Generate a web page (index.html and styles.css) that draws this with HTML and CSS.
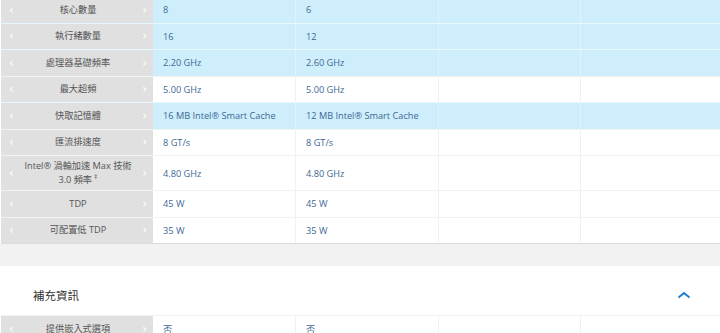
FILE: index.html
```html
<!DOCTYPE html>
<html lang="zh-Hant">
<head>
<meta charset="utf-8">
<link rel="stylesheet" href="styles.css">
</head>
<body>
<div class="specs">
  <div class="row hl"><div class="label"><span class="arr">‹</span><span class="lt">核心數量</span><span class="arr">›</span></div><div class="val">8</div><div class="val">6</div><div class="val"></div><div class="val"></div></div>
  <div class="row hl"><div class="label"><span class="arr">‹</span><span class="lt">執行緒數量</span><span class="arr">›</span></div><div class="val">16</div><div class="val">12</div><div class="val"></div><div class="val"></div></div>
  <div class="row hl"><div class="label"><span class="arr">‹</span><span class="lt">處理器基礎頻率</span><span class="arr">›</span></div><div class="val">2.20 GHz</div><div class="val">2.60 GHz</div><div class="val"></div><div class="val"></div></div>
  <div class="row"><div class="label"><span class="arr">‹</span><span class="lt">最大超頻</span><span class="arr">›</span></div><div class="val">5.00 GHz</div><div class="val">5.00 GHz</div><div class="val"></div><div class="val"></div></div>
  <div class="row hl"><div class="label"><span class="arr">‹</span><span class="lt">快取記憶體</span><span class="arr">›</span></div><div class="val">16 MB Intel® Smart Cache</div><div class="val">12 MB Intel® Smart Cache</div><div class="val"></div><div class="val"></div></div>
  <div class="row"><div class="label"><span class="arr">‹</span><span class="lt">匯流排速度</span><span class="arr">›</span></div><div class="val">8 GT/s</div><div class="val">8 GT/s</div><div class="val"></div><div class="val"></div></div>
  <div class="row tall"><div class="label"><span class="arr">‹</span><span class="lt">Intel® 渦輪加速 Max 技術<br>3.0 頻率<sup>‡</sup></span><span class="arr">›</span></div><div class="val">4.80 GHz</div><div class="val">4.80 GHz</div><div class="val"></div><div class="val"></div></div>
  <div class="row"><div class="label"><span class="arr">‹</span><span class="lt">TDP</span><span class="arr">›</span></div><div class="val">45 W</div><div class="val">45 W</div><div class="val"></div><div class="val"></div></div>
  <div class="row last"><div class="label"><span class="arr">‹</span><span class="lt">可配置低 TDP</span><span class="arr">›</span></div><div class="val">35 W</div><div class="val">35 W</div><div class="val"></div><div class="val"></div></div>
</div>
<div class="band"></div>
<section class="section">
  <div class="sec-head">
    <h2 class="sec-title">補充資訊</h2>
    <svg class="caret" width="14" height="8" viewBox="0 0 14 8"><path d="M1.5 6.5 L7 2 L12.5 6.5" fill="none" stroke="#1a7fd0" stroke-width="2"/></svg>
  </div>
  <div class="specs">
    <div class="row"><div class="label"><span class="arr">‹</span><span class="lt">提供嵌入式選項</span><span class="arr">›</span></div><div class="val">否</div><div class="val">否</div><div class="val"></div><div class="val"></div></div>
  </div>
</section>
</body>
</html>
```
FILE: styles.css
```css
html, body {
  margin: 0;
  padding: 0;
  background: #ffffff;
  font-family: "Open Sans", "Noto Sans CJK TC", sans-serif;
  overflow: hidden;
}
.specs {
  padding-left: 1px;
}
body > .specs {
  margin-top: -4px;
}
.row {
  display: grid;
  grid-template-columns: 152px 142px 143px 142px 1fr;
  height: 25.5px;
  border-top: 1px solid #f2f2f2;
}
.row.tall {
  height: 34px;
}
.row.last {
  border-bottom: 1px solid #dcdcdc;
}
.label {
  background: #e0e0e0;
  display: flex;
  align-items: center;
  justify-content: space-between;
  padding: 0 6px 0 8px;
  color: #555555;
  font-size: 9.2px;
  line-height: 14px;
}
.lt {
  flex: 1;
  text-align: center;
  white-space: nowrap;
}
.lt sup {
  font-size: 7px;
  line-height: 0;
  vertical-align: 4px;
  margin-left: 2px;
}
.arr {
  color: #ffffff;
  font-size: 12px;
  font-family: "DejaVu Sans", sans-serif;
}
.val {
  display: flex;
  align-items: center;
  padding-left: 10px;
  color: #3d6894;
  font-size: 9.2px;
  border-left: 1px solid #f1f1f1;
  white-space: nowrap;
  overflow: hidden;
}
.label + .val {
  border-left: none;
}
.row.hl .val {
  background: #cfeefc;
  border-left-color: #dff3fc;
}
.row.hl {
  border-top-color: #e8f6fd;
}
.band {
  height: 22px;
  background: #f2f2f2;
}
.section {
  background: #ffffff;
}
.sec-head {
  height: 49px;
  display: flex;
  align-items: center;
  justify-content: space-between;
  padding: 9px 29px 0 33px;
  box-sizing: border-box;
}
.sec-title {
  margin: 0;
  font-size: 11.5px;
  font-weight: normal;
  color: #333333;
  font-family: "Noto Sans CJK TC", sans-serif;
}
.caret {
  display: block;
  margin-top: -1px;
}
```
